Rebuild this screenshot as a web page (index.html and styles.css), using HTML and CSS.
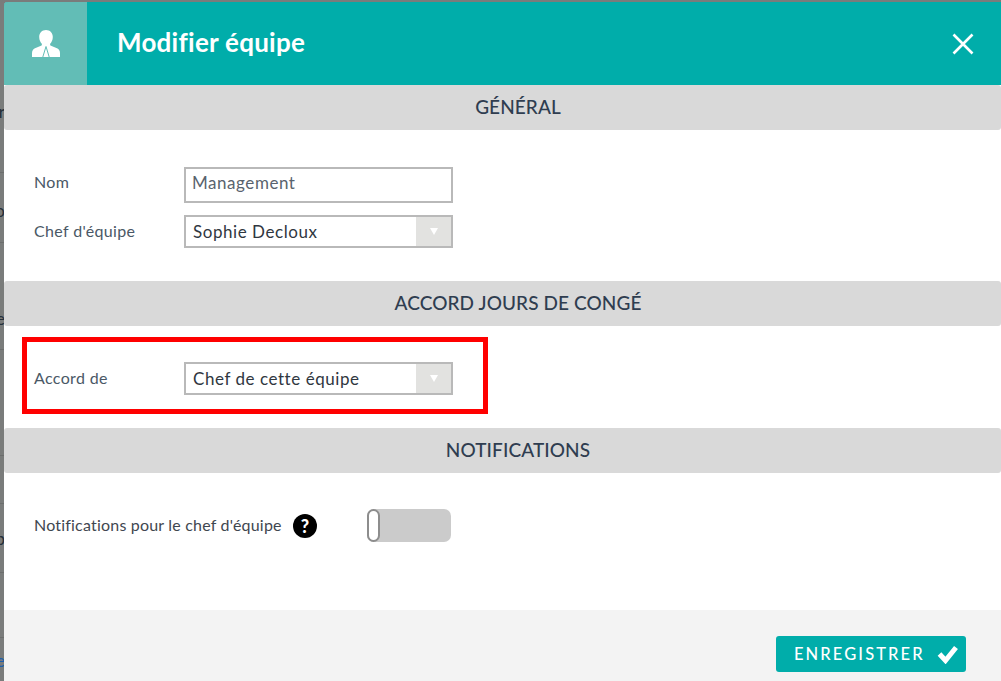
FILE: index.html
```html
<!DOCTYPE html>
<html lang="fr">
<head>
<meta charset="utf-8">
<title>Modifier équipe</title>
<link rel="stylesheet" href="styles.css">
</head>
<body>
<div class="screen">
  <div class="behind">
    <div class="behind-row r1"><span>r</span></div>
    <div class="behind-row r2"><span>o</span></div>
    <div class="behind-row r3"><span>e</span></div>
    <div class="behind-row r4"></div>
    <div class="behind-row r5"></div>
    <div class="behind-row r6"><span>b</span></div>
    <div class="behind-row r7"></div>
    <div class="behind-row r8"><span class="link">e</span></div>
  </div>
  <main class="modal">
    <header class="modal-head">
      <div class="head-icon">
        <svg width="28" height="28" viewBox="0 0 28 28" aria-hidden="true">
          <path fill="#fff" d="M14 0c4 0 6.800 2.800 6.800 7 0 3-1.300 5.500-2.800 7l.4 1.500 6.600 2.800c2 .9 3 2.600 3 5V27H0v-3.700c0-2.400 1-4.100 3-5l6.600-2.800L10 14c-1.500-1.500-2.800-4-2.800-7C7.200 2.800 10 0 14 0z"/>
          <path fill="none" stroke="#62bdb6" stroke-width="1" d="M14 16.500L10.800 27M14 16.500L17.200 27"/>
        </svg>
      </div>
      <h1 class="modal-title">Modifier équipe</h1>
      <button class="close" type="button" aria-label="Fermer">
        <svg width="22" height="22" viewBox="0 0 22 22" aria-hidden="true"><path d="M1.500 1.500l19 19M20.500 1.500l-19 19" stroke="#fff" stroke-width="2.600" fill="none"/></svg>
      </button>
    </header>

    <h2 class="section-head">GÉNÉRAL</h2>
    <section class="section s-general">
      <div class="row row-name">
        <label class="label">Nom</label>
        <div class="input">Management</div>
      </div>
      <div class="row">
        <label class="label">Chef d'équipe</label>
        <div class="select"><span class="select-value">Sophie Decloux</span><span class="select-arrow"><i class="tri"></i></span></div>
      </div>
    </section>

    <h2 class="section-head">ACCORD JOURS DE CONGÉ</h2>
    <section class="section s-accord">
      <div class="highlight">
        <div class="row">
          <label class="label">Accord de</label>
          <div class="select"><span class="select-value">Chef de cette équipe</span><span class="select-arrow"><i class="tri"></i></span></div>
        </div>
      </div>
    </section>

    <h2 class="section-head">NOTIFICATIONS</h2>
    <section class="section s-notif">
      <div class="notif-row">
        <span class="notif-label">Notifications pour le chef d'équipe</span>
        <span class="help">?</span>
        <span class="toggle"><i class="knob"></i></span>
      </div>
    </section>

    <footer class="modal-foot">
      <button class="save" type="button">ENREGISTRER
        <svg width="22" height="19" viewBox="0 0 22 19" aria-hidden="true"><path d="M2.500 9l6 6.500L19 2.500" stroke="#fff" stroke-width="5" fill="none"/></svg>
      </button>
    </footer>
  </main>
</div>
</body>
</html>
```
FILE: styles.css
```css
* { box-sizing: border-box; }
html, body { margin: 0; height: 100%; overflow: hidden; }
body { background: #7a7c7b; font-family: "Lato", "Open Sans", sans-serif; color: #2f3b4a; }
.screen { display: flex; height: 681px; width: 1001px; padding-top: 2px; }

.behind { width: 4px; flex: none; margin-top: -2px; overflow: hidden; background: #7a7c7b; }
.behind-row { display: flex; justify-content: flex-end; align-items: center; border-bottom: 1px solid #6c6e6d; color: #26303a; font-size: 18px; }
.behind-row span { flex: none; margin-right: -1px; line-height: 1; }
.behind-row .link { color: #1c5fae; }
.r1 { height: 173px; padding-top: 50px; }
.r2 { height: 70px; padding-top: 4px; }
.r3 { height: 107px; padding-top: 44px; }
.r4 { height: 106px; }
.r5 { height: 48px; }
.r6 { height: 69px; }
.r7 { height: 65px; }
.r8 { height: 43px; border-bottom: 0; }

.modal { flex: 1; display: flex; flex-direction: column; background: #fff; border-radius: 4px 0 0 0; overflow: hidden; }

.modal-head { height: 83px; flex: none; display: flex; align-items: center; background: #00adaa; }
.head-icon { width: 83px; height: 83px; flex: none; display: flex; align-items: center; justify-content: center; background: #62bdb6; }
.modal-title { margin: 0 0 3px 30px; flex: 1; font-size: 26px; font-weight: 700; color: #fff; letter-spacing: .25px; }
.close { flex: none; margin-right: 27px; padding: 0; border: 0; background: none; display: flex; }

.section-head { margin: 0; height: 45px; flex: none; display: flex; align-items: center; justify-content: center; padding: 0 0 2px 31px; background: #d9d9d9; border-radius: 3px; font-size: 19px; font-weight: 500; letter-spacing: .1px; color: #2f3d50; }

.section { flex: none; background: #fff; }
.s-general { height: 151px; padding: 36px 0 0 30px; }
.s-accord { height: 102px; padding: 11px 0 0 18px; }
.s-notif { height: 137px; padding: 36px 0 0 30px; }

.row { display: flex; align-items: center; height: 33px; }
.row-name { height: 37px; margin-bottom: 12px; }
.row-name .label { padding-bottom: 6px; }
.label { width: 150px; flex: none; font-size: 16px; letter-spacing: .35px; color: #4a5866; padding-bottom: 2px; }

.input { width: 269px; height: 36px; border: 2px solid #b9b9b9; display: flex; align-items: center; padding: 0 0 5px 6px; font-size: 17px; letter-spacing: .55px; color: #59636e; }
.select { width: 269px; height: 33px; border: 2px solid #b9b9b9; display: flex; font-size: 17px; letter-spacing: .55px; color: #30373f; }
.select-value { flex: 1; padding-left: 7px; display: flex; align-items: center; }
.select-arrow { width: 35px; flex: none; background: #e2e2e0; display: flex; align-items: center; justify-content: center; }
.tri { width: 0; height: 0; border-left: 4px solid transparent; border-right: 4px solid transparent; border-top: 7px solid #fff; }

.highlight { width: 466px; height: 77px; border: 5px solid #f00; padding: 20px 0 0 7px; }

.notif-row { display: flex; align-items: center; height: 33px; }
.notif-label { font-size: 16px; letter-spacing: .2px; color: #3f4750; width: 248px; flex: none; padding-bottom: 2px; white-space: nowrap; }
.help { width: 24px; height: 24px; flex: none; border-radius: 50%; background: #000; color: #fff; display: flex; align-items: center; justify-content: center; font-size: 18px; font-weight: 900; margin-left: 11px; }
.toggle { width: 84px; height: 33px; flex: none; margin-left: 50px; border-radius: 7px; background: #cbcbcb; display: flex; }
.knob { width: 13px; height: 33px; border: 2px solid #8d8d8d; border-radius: 7px; background: #fff; }

.modal-foot { flex: 1; background: #f3f3f3; display: flex; justify-content: flex-end; align-items: flex-start; padding: 26px 35px 0 0; }
.save { width: 190px; height: 36px; border: 0; border-radius: 3px; background: #00adaa; color: #fff; font-family: inherit; font-size: 16.500px; font-weight: 500; letter-spacing: 2.100px; display: flex; align-items: center; justify-content: space-between; padding: 0 7px 0 18px; }
```
